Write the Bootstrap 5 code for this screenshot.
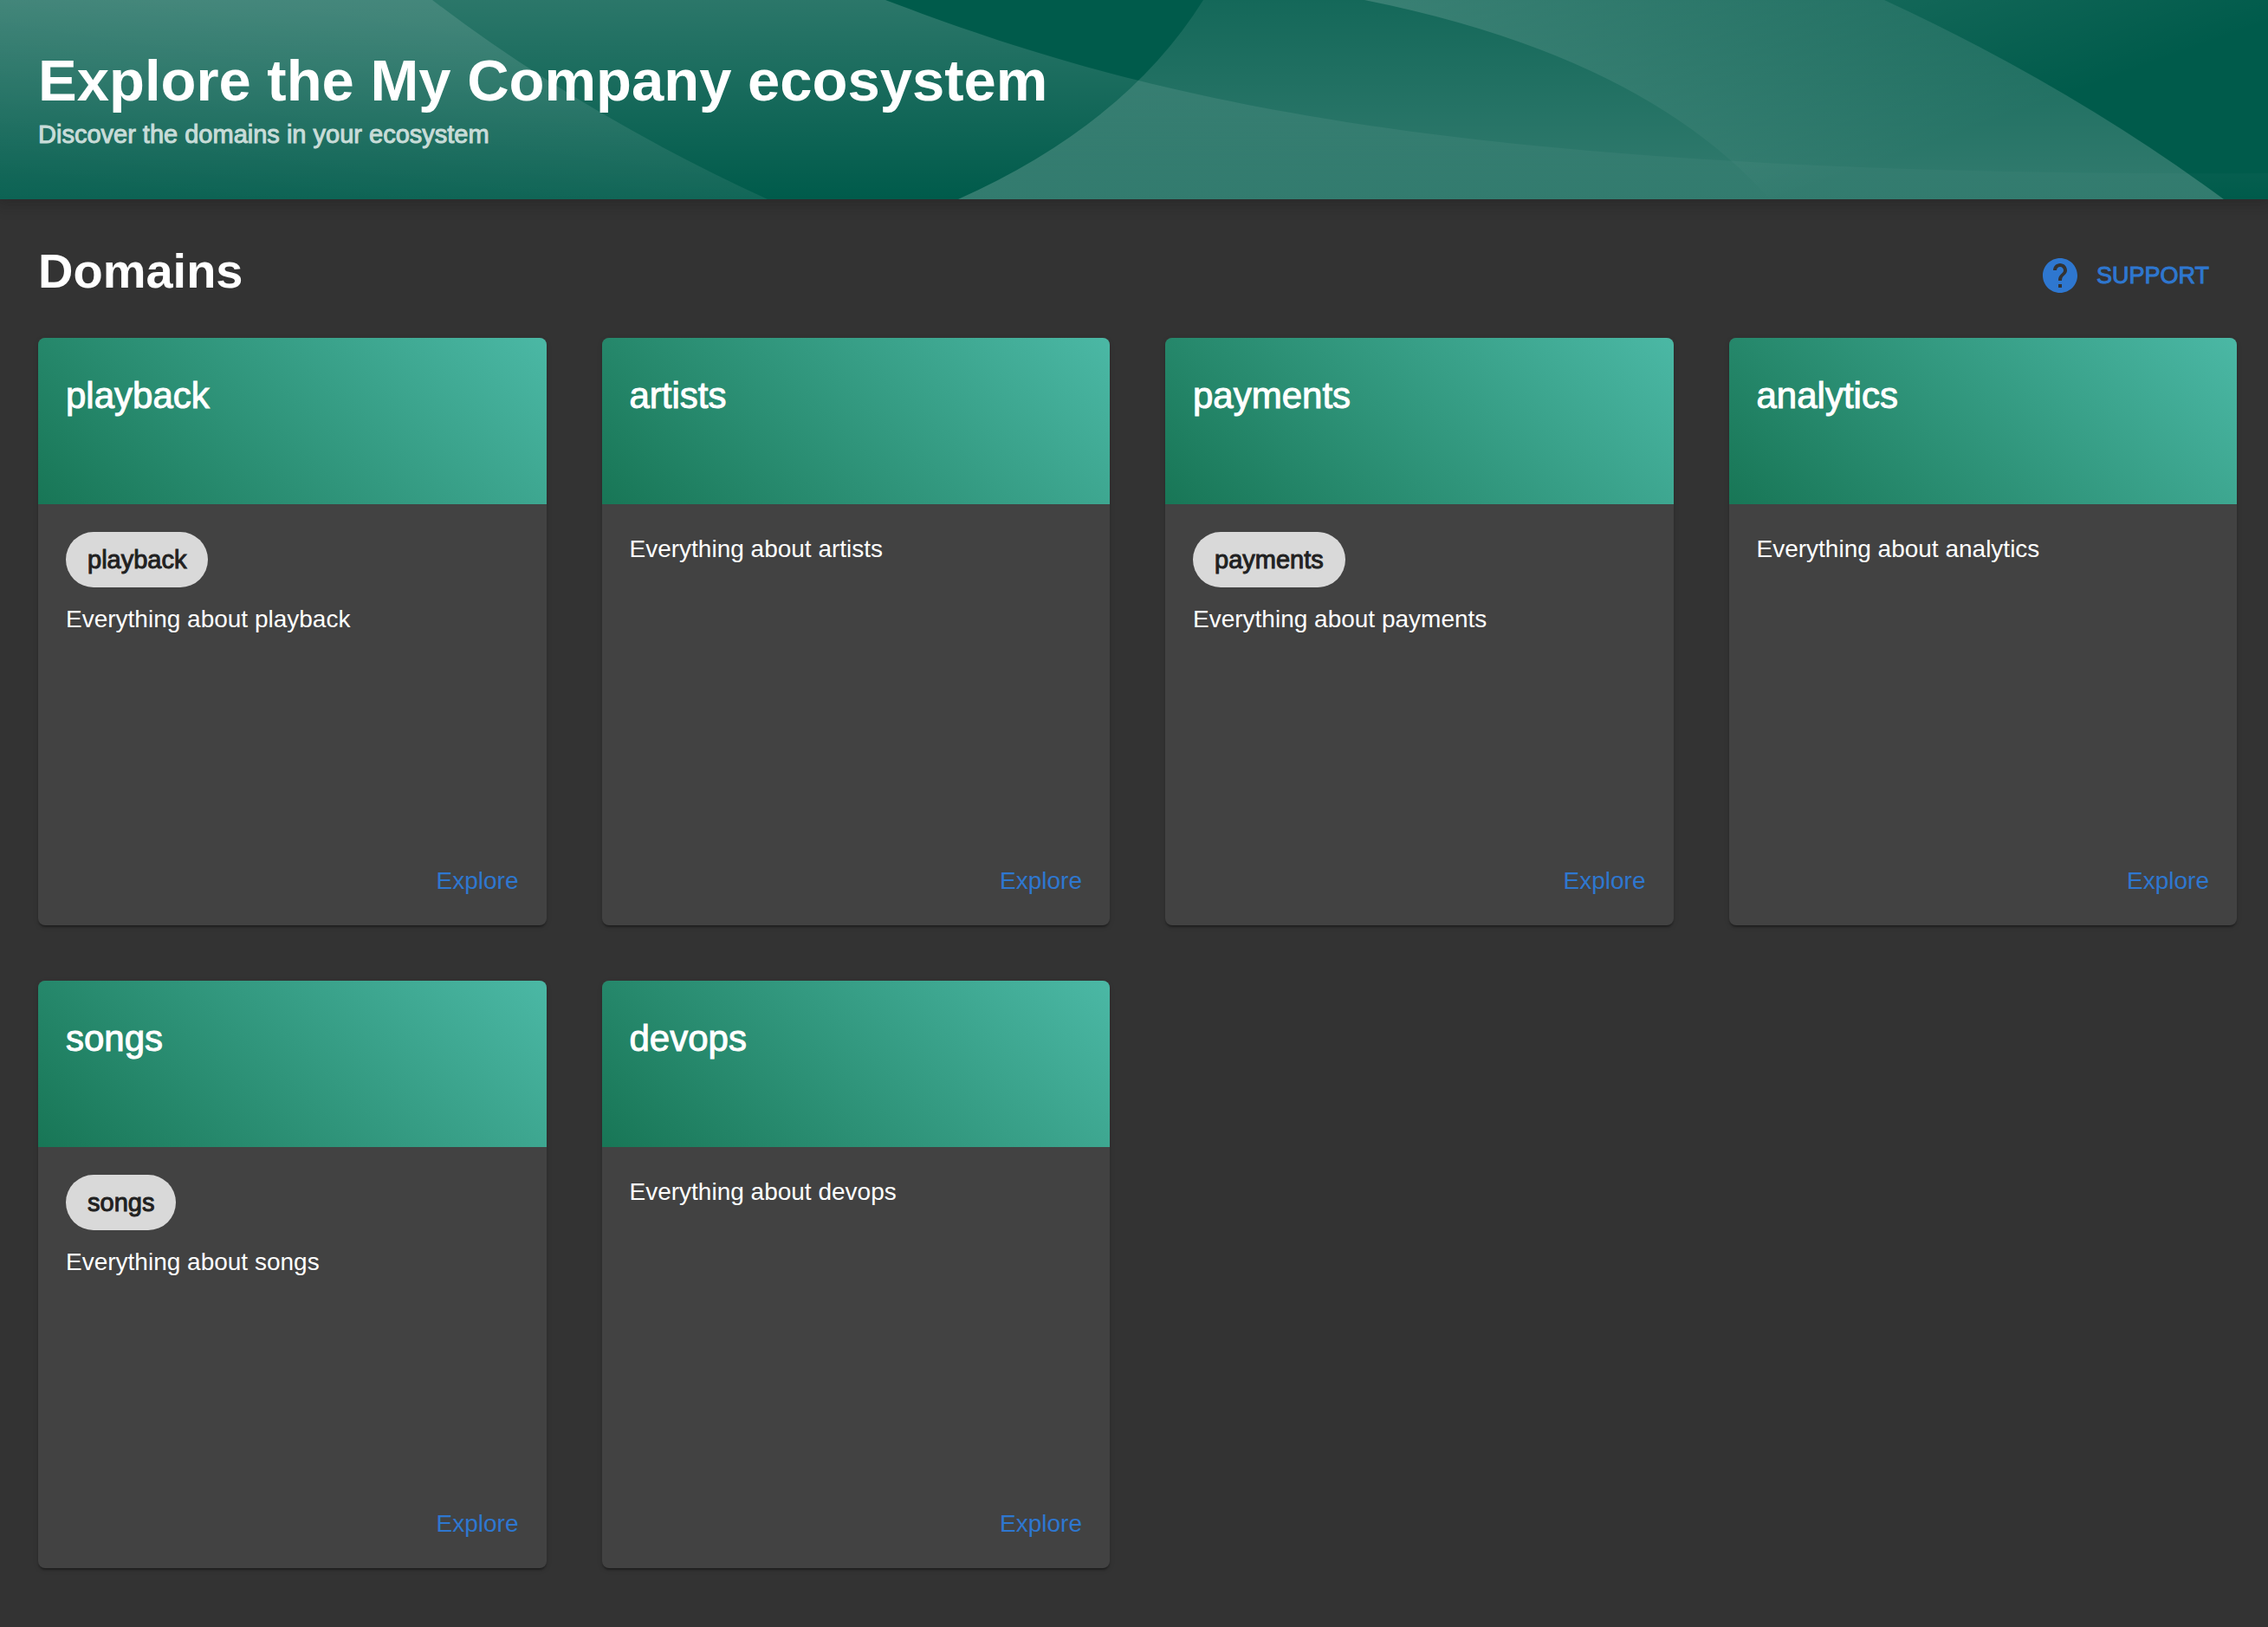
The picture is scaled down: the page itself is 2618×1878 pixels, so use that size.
<!DOCTYPE html>
<html lang="en">
<head>
<meta charset="utf-8">
<meta name="viewport" content="width=device-width, initial-scale=1">
<title>Explore the My Company ecosystem</title>
<link href="https://cdn.jsdelivr.net/npm/bootstrap@5.3.0/dist/css/bootstrap.min.css" rel="stylesheet">
<style>
  body { background: #333; color: #fff; font-family: "Liberation Sans", Arial, sans-serif; font-size: 28px; line-height: 40px; }
  a, .support-btn { color: #2e77d0; }
  .page-banner { background: #005b4b; padding: 52px 44px 55px; box-shadow: 0 0 16px 6px rgba(20, 20, 20, .3); }
  .banner-waves { z-index: 0; }
  .banner-text { z-index: 1; }
  .banner-title { font-size: 67px; line-height: 82px; margin-bottom: 1px; }
  .banner-sub { font-size: 29px; color: #c8dcd8; }
  .page-body { padding: 51px 36px 68px 44px; }
  .section-bar { margin-bottom: 45px; }
  .section-title { font-size: 56px; line-height: 64px; }
  .support-btn { gap: 22px; padding: 7px 32px; border: 0; background: none; font-size: 27px; line-height: 40px; }
  .support-btn svg { width: 40px; height: 40px; }
  .domain-grid { --bs-gutter-x: 64px; --bs-gutter-y: 64px; }
  .domain-card { min-height: 678px; background: #424242; color: #fff; border: 0; border-radius: 8px; overflow: hidden;
    box-shadow: 0 4px 2px -2px rgba(0, 0, 0, .2), 0 2px 2px rgba(0, 0, 0, .14), 0 2px 6px rgba(0, 0, 0, .12); }
  .domain-head { height: 192px; padding: 43px 32px; background: linear-gradient(-137deg, #4bb8a5 0%, #187656 100%); }
  .domain-name { font-size: 42px; line-height: 48px; }
  .domain-body { padding: 32px 32px 31px; gap: 17px; }
  .domain-chip { height: 64px; padding: 12px 25px; border-radius: 32px; background: #d9d9d9; color: #212121; font-size: 29px; }
  .medium-weight { -webkit-text-stroke: 1px currentColor; }
</style>
</head>
<body>
<header class="page-banner position-relative">
  <svg class="banner-waves position-absolute top-0 start-0 w-100 h-100" viewBox="0 0 2618 230" preserveAspectRatio="none" aria-hidden="true">
    <defs>
      <linearGradient id="gLeft" gradientUnits="userSpaceOnUse" x1="250" y1="0" x2="225" y2="230"><stop offset="0" stop-color="#fff" stop-opacity=".12"/><stop offset="1" stop-color="#fff" stop-opacity=".05"/></linearGradient>
      <linearGradient id="gWave" gradientUnits="userSpaceOnUse" x1="0" y1="0" x2="0" y2="230"><stop offset="0" stop-color="#fff" stop-opacity=".17"/><stop offset="1" stop-color="#fff" stop-opacity="0"/></linearGradient>
      <linearGradient id="gMid" gradientUnits="userSpaceOnUse" x1="0" y1="0" x2="0" y2="230"><stop offset="0" stop-color="#fff" stop-opacity=".08"/><stop offset="1" stop-color="#fff" stop-opacity=".2"/></linearGradient>
      <linearGradient id="gArc" gradientUnits="userSpaceOnUse" x1="1575" y1="0" x2="1706" y2="360"><stop offset="0" stop-color="#fff" stop-opacity=".16"/><stop offset="1" stop-color="#fff" stop-opacity="0"/></linearGradient>
    </defs>
    <path fill="url(#gWave)" d="M0 0H1022C1300 105 1640 205 2618 200V230H0Z"/>
    <path fill="url(#gLeft)" d="M0 0H499Q667 129 886 230H0Z"/>
    <path fill="url(#gMid)" d="M1389 0Q1299 144 1106 230H2567Q2389 99 2175 0Z"/>
    <path fill="url(#gArc)" d="M1575 0Q1895 64 2043 230H2618V0Z"/>
  </svg>
  <div class="banner-text position-relative">
    <h1 class="banner-title fw-bold">Explore the My Company ecosystem</h1>
    <p class="banner-sub medium-weight mb-0">Discover the domains in your ecosystem</p>
  </div>
</header>

<main class="page-body">
  <div class="section-bar d-flex justify-content-between align-items-end">
    <h2 class="section-title fw-bold mb-0">Domains</h2>
    <button type="button" class="support-btn medium-weight d-flex align-items-center">
      <svg viewBox="2 2 20 20" fill="currentColor" aria-hidden="true"><path d="M12 2C6.48 2 2 6.48 2 12s4.48 10 10 10 10-4.480 10-10S17.520 2 12 2zm1 17h-2v-2h2v2zm2.070-7.750l-.9.920C13.450 12.900 13 13.500 13 15h-2v-.5c0-1.100.450-2.100 1.170-2.830l1.240-1.260c.370-.360.590-.860.590-1.410 0-1.100-.9-2-2-2s-2 .9-2 2H8c0-2.210 1.790-4 4-4s4 1.790 4 4c0 .880-.360 1.680-.930 2.250z"/></svg>
      SUPPORT
    </button>
  </div>

  <div class="domain-grid row row-cols-4">
    <div class="col">
      <article class="domain-card card">
        <div class="domain-head"><h3 class="domain-name medium-weight fw-normal mb-0">playback</h3></div>
        <div class="domain-body d-flex flex-column align-items-start flex-grow-1">
          <span class="domain-chip medium-weight">playback</span>
          <p class="mb-0">Everything about playback</p>
          <a class="text-decoration-none mt-auto ms-auto" href="#playback">Explore</a>
        </div>
      </article>
    </div>
    <div class="col">
      <article class="domain-card card">
        <div class="domain-head"><h3 class="domain-name medium-weight fw-normal mb-0">artists</h3></div>
        <div class="domain-body d-flex flex-column align-items-start flex-grow-1">
          <p class="mb-0">Everything about artists</p>
          <a class="text-decoration-none mt-auto ms-auto" href="#artists">Explore</a>
        </div>
      </article>
    </div>
    <div class="col">
      <article class="domain-card card">
        <div class="domain-head"><h3 class="domain-name medium-weight fw-normal mb-0">payments</h3></div>
        <div class="domain-body d-flex flex-column align-items-start flex-grow-1">
          <span class="domain-chip medium-weight">payments</span>
          <p class="mb-0">Everything about payments</p>
          <a class="text-decoration-none mt-auto ms-auto" href="#payments">Explore</a>
        </div>
      </article>
    </div>
    <div class="col">
      <article class="domain-card card">
        <div class="domain-head"><h3 class="domain-name medium-weight fw-normal mb-0">analytics</h3></div>
        <div class="domain-body d-flex flex-column align-items-start flex-grow-1">
          <p class="mb-0">Everything about analytics</p>
          <a class="text-decoration-none mt-auto ms-auto" href="#analytics">Explore</a>
        </div>
      </article>
    </div>
    <div class="col">
      <article class="domain-card card">
        <div class="domain-head"><h3 class="domain-name medium-weight fw-normal mb-0">songs</h3></div>
        <div class="domain-body d-flex flex-column align-items-start flex-grow-1">
          <span class="domain-chip medium-weight">songs</span>
          <p class="mb-0">Everything about songs</p>
          <a class="text-decoration-none mt-auto ms-auto" href="#songs">Explore</a>
        </div>
      </article>
    </div>
    <div class="col">
      <article class="domain-card card">
        <div class="domain-head"><h3 class="domain-name medium-weight fw-normal mb-0">devops</h3></div>
        <div class="domain-body d-flex flex-column align-items-start flex-grow-1">
          <p class="mb-0">Everything about devops</p>
          <a class="text-decoration-none mt-auto ms-auto" href="#devops">Explore</a>
        </div>
      </article>
    </div>
  </div>
</main>
<script src="https://cdn.jsdelivr.net/npm/bootstrap@5.3.0/dist/js/bootstrap.bundle.min.js"></script>
</body>
</html>
